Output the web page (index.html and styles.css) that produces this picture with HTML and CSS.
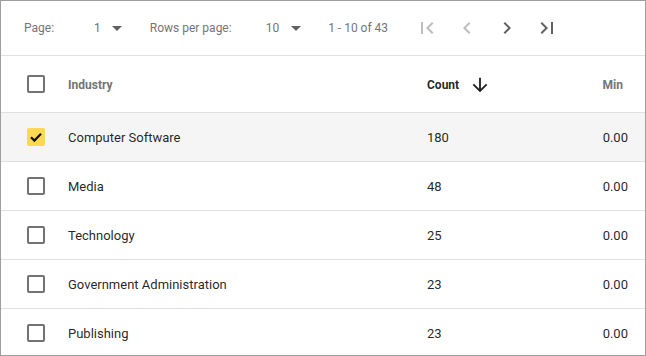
FILE: index.html
```html
<!DOCTYPE html>
<html>
<head>
<meta charset="utf-8">
<link rel="stylesheet" href="styles.css">
</head>
<body>
<div class="frame">
  <div class="toolbar">
    <span class="label">Page:</span>
    <span class="select sel-page">1<svg class="tri" width="10" height="5" viewBox="0 0 10 5"><polygon points="0,0 10,0 5,5"/></svg></span>
    <span class="label">Rows per page:</span>
    <span class="select sel-rows">10<svg class="tri" width="10" height="5" viewBox="0 0 10 5"><polygon points="0,0 10,0 5,5"/></svg></span>
    <span class="label range">1 - 10 of 43</span>
    <span class="nav">
      <svg class="ico off" viewBox="0 0 24 24"><path d="M18.41 16.59L13.82 12l4.59-4.59L17 6l-6 6 6 6zM6 6h2v12H6z"/></svg>
      <svg class="ico off" viewBox="0 0 24 24"><path d="M15.41 7.41L14 6l-6 6 6 6 1.41-1.41L10.83 12z"/></svg>
      <svg class="ico on" viewBox="0 0 24 24"><path d="M10 6L8.59 7.41 13.17 12l-4.58 4.59L10 18l6-6z"/></svg>
      <svg class="ico on" viewBox="0 0 24 24"><path d="M5.59 7.41L10.18 12l-4.59 4.59L7 18l6-6-6-6zM16 6h2v12h-2z"/></svg>
    </span>
  </div>
  <table class="grid">
    <colgroup><col class="c1"><col class="c2"><col class="c3"><col class="c4"></colgroup>
    <thead>
      <tr>
        <th class="cb"><span class="box"></span></th>
        <th class="h">Industry</th>
        <th class="h sorted"><span class="sortwrap">Count<svg class="arrow" viewBox="0 0 24 24"><path d="M20 12l-1.41-1.41L13 16.170V4h-2v12.17l-5.58-5.59L4 12l8 8 8-8z"/></svg></span></th>
        <th class="h num">Min</th>
      </tr>
    </thead>
    <tbody>
      <tr class="selected">
        <td class="cb"><span class="box checked"><svg viewBox="0 0 18 18"><polyline points="4,9.3 7.4,12.6 14,5.8"/></svg></span></td>
        <td>Computer Software</td><td>180</td><td class="num">0.00</td>
      </tr>
      <tr>
        <td class="cb"><span class="box"></span></td>
        <td>Media</td><td>48</td><td class="num">0.00</td>
      </tr>
      <tr>
        <td class="cb"><span class="box"></span></td>
        <td>Technology</td><td>25</td><td class="num">0.00</td>
      </tr>
      <tr>
        <td class="cb"><span class="box"></span></td>
        <td>Government Administration</td><td>23</td><td class="num">0.00</td>
      </tr>
      <tr>
        <td class="cb"><span class="box"></span></td>
        <td>Publishing</td><td>23</td><td class="num">0.00</td>
      </tr>
    </tbody>
  </table>
</div>
</body>
</html>
```
FILE: styles.css
```css
html, body { margin: 0; padding: 0; background: #fff; }
body { font-family: Roboto, "Noto Sans", Arial, sans-serif; }
.frame {
  width: 646px; height: 356px; box-sizing: border-box;
  border: 1px solid #9e9e9e; overflow: hidden; background: #fff;
}
.toolbar {
  height: 54px; border-bottom: 1px solid #e0e0e0;
  display: flex; align-items: center; padding-left: 23px;
  font-size: 12px; color: #757575;
}
.label { line-height: 16px; }
.select { display: flex; align-items: center; line-height: 16px; color: #757575; }
.sel-page { margin-left: 40px; margin-right: 28px; }
.sel-rows { margin-left: 34px; margin-right: 27px; }
.tri { margin-left: 11px; fill: #616161; }
.sel-rows .tri { margin-left: 12px; }
.range { margin-right: 27px; }
.nav { display: flex; gap: 16px; }
.ico { width: 24px; height: 24px; display: block; }
.ico.off { fill: #bdbdbd; }
.ico.on { fill: #616161; }

.grid { width: 644px; border-collapse: collapse; table-layout: fixed; }
.c1 { width: 67px; } .c2 { width: 359px; } .c3 { width: 130px; } .c4 { width: 88px; }
.grid th, .grid td { padding: 2px 0 0 0; text-align: left; border-bottom: 1px solid #e0e0e0; }
.grid thead tr { height: 56px; }
.grid tbody tr { height: 49px; }
.grid th.h { font-size: 12px; font-weight: 700; color: #757575; }
.grid th.sorted { color: rgba(0,0,0,0.87); }
.grid td { font-size: 13px; color: rgba(0,0,0,0.87); }
.grid .num { text-align: right; padding-right: 17px; }
.grid th.num { padding-right: 22px; }
.grid .cb { padding: 0 0 0 26px; }
.grid tr.selected td { background: #f5f5f5; }
.sortwrap { display: inline-flex; align-items: center; }
.arrow { width: 22px; height: 22px; margin-left: 10px; fill: #212121; display: block; }
.box {
  display: block; width: 18px; height: 18px; box-sizing: border-box;
  border: 2px solid #727272; border-radius: 2px;
}
.box.checked { border: none; background: #fdd853; }
.box.checked svg { display: block; width: 18px; height: 18px; fill: none; stroke: #111; stroke-width: 2.2; }
```
